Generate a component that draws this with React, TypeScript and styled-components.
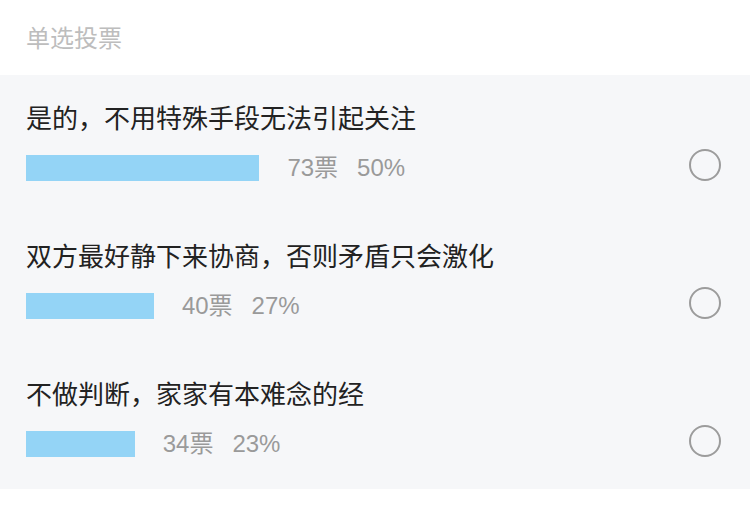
import React from "react";
import styled, { createGlobalStyle } from "styled-components";

const GlobalStyle = createGlobalStyle`
  html, body { margin: 0; padding: 0; background: #ffffff; }
  body { font-family: "Liberation Sans", "Noto Sans CJK SC", sans-serif; }
  * { box-sizing: border-box; }
`;

const Page = styled.div`
  width: 750px;
  height: 510px;
  background: #ffffff;
`;

const Header = styled.div`
  height: 75px;
  display: flex;
  align-items: center;
  padding: 0 26px 2px;
  font-size: 24px;
  color: #bdbdbd;
`;

const List = styled.div`
  background: #f6f7f9;
`;

const Option = styled.div`
  height: 138px;
  padding: 29px 29px 0 26px;
`;

const Title = styled.div`
  font-size: 26px;
  line-height: 30px;
  color: #222222;
  white-space: nowrap;
`;

const Row = styled.div`
  margin-top: 15px;
  display: flex;
  align-items: flex-end;
`;

const Bar = styled.div`
  height: 26px;
  background: #94d4f6;
  flex: none;
`;

const Stats = styled.div`
  height: 26px;
  margin-left: 28px;
  display: flex;
  align-items: center;
  font-size: 24px;
  line-height: 26px;
  color: #9a9a9a;
  gap: 19px;
  flex: 1;
`;

const Radio = styled.div`
  width: 32px;
  height: 32px;
  border-radius: 50%;
  border: 2px solid #9c9c9c;
  flex: none;
`;

const options = [
  { title: "是的，不用特殊手段无法引起关注", votes: 73, pct: "50%" },
  { title: "双方最好静下来协商，否则矛盾只会激化", votes: 40, pct: "27%" },
  { title: "不做判断，家家有本难念的经", votes: 34, pct: "23%" },
];

const total = options.reduce((s, o) => s + o.votes, 0);

export default function App() {
  return (
    <Page>
      <GlobalStyle />
      <Header>单选投票</Header>
      <List>
        {options.map((o) => (
          <Option key={o.title}>
            <Title>{o.title}</Title>
            <Row>
              <Bar style={{ width: `${(o.votes / total) * 470}px` }} />
              <Stats>
                <span>{o.votes}票</span>
                <span>{o.pct}</span>
              </Stats>
              <Radio />
            </Row>
          </Option>
        ))}
      </List>
    </Page>
  );
}
